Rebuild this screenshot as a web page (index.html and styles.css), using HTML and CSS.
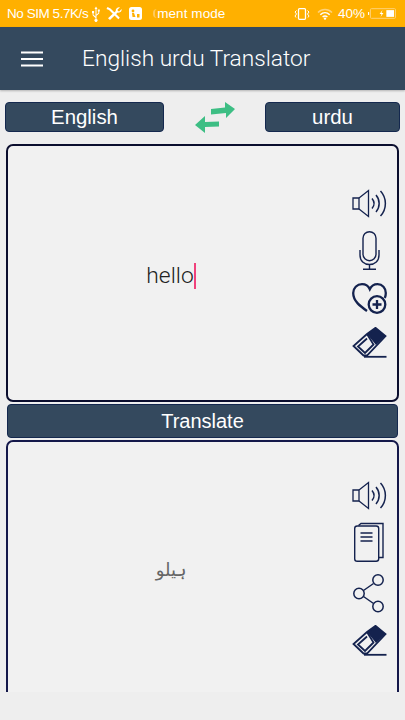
FILE: index.html
```html
<!DOCTYPE html>
<html lang="en">
<head>
<meta charset="utf-8">
<title>English urdu Translator</title>
<link rel="stylesheet" href="styles.css">
</head>
<body>
<div class="status">
  <span class="st-text st-sim">No SIM 5.7K/s</span>
  <svg class="st-usb" viewBox="0 0 8 16"><path d="M4 .5 2.500 3h1v7.500L1.500 8.800V7.200h.6V5H0v2.200h.6v2L3.500 12v1a1.500 1.500 0 1 0 1 0V9.800l2.700-2.300v-2h.6V3.400H5.800v2.100h.5V7L4.500 8.500V3h1z" fill="#fff"/></svg>
  <svg class="st-tools" viewBox="0 0 16 13"><path d="M1.500 0 4.500 1.500 13.800 10.800 12.300 12.300 3 3 .5 2z" fill="#fff"/><path d="M14 .3 11.500 2.700 11.900 4l1.300.4L15.600 2c.4 2-1.200 4.200-3.900 3.600L4 13 2 11.300 9.800 4c-.5-2.300 1.800-4.200 4.200-3.700z" fill="#fff"/></svg>
  <svg class="st-app" viewBox="0 0 13 13"><rect width="13" height="13" rx="2.500" fill="#fff"/><circle cx="4" cy="4" r="1.400" fill="#FFB000"/><path d="M3 6h2l1.500 4h-3z M8 7h2.500v3.500H8z" fill="#FFB000"/></svg>
  <span class="st-fade"></span><span class="st-text st-mode">ment mode</span>
  <span class="st-spacer"></span>
  <svg class="st-vib" viewBox="0 0 16 12"><rect x="4.500" y=".7" width="7" height="10.600" rx="1" fill="none" stroke="#fff" stroke-width="1.300"/><path d="M2.500 2.500 1 4l1.500 2L1 8l1 1.500M13.500 2.500 15 4l-1.500 2L15 8l-1 1.500" fill="none" stroke="#fff"/></svg>
  <svg class="st-wifi" viewBox="0 0 16 12"><path d="M1 4.500c4-4 10-4 14 0" fill="none" stroke="#FFD27A" stroke-width="1.500"/><path d="M3.300 6.800c2.800-2.700 6.600-2.700 9.400 0M5.600 9c1.500-1.300 3.300-1.300 4.800 0" fill="none" stroke="#fff" stroke-width="1.500"/><circle cx="8" cy="10.600" r="1.200" fill="#fff"/></svg>
  <span class="st-text st-batt-text">40%</span>
  <svg class="st-batt" viewBox="0 0 29 11"><rect x="0" y="4" width="1.200" height="3" fill="#fff"/><rect x="2.500" y=".5" width="26" height="10" rx="1" fill="none" stroke="#FFD27A"/><rect x="19" y="2" width="8" height="7" fill="#fff"/><path d="M15 2l-3 4h2l-1 3 3-4h-2z" fill="#fff"/></svg>
</div>

<header class="appbar">
  <svg class="menu-icon" viewBox="0 0 22 16"><path d="M0 1.500h22M0 8h22M0 14.500h22" stroke="#fff" stroke-width="2.200"/></svg>
  <h1 class="title">English urdu Translator</h1>
</header>

<main class="content">
  <div class="langs">
    <button class="btn lang-left">English</button>
    <svg class="swap" viewBox="0 0 40 31"><path d="M16 7 30 5.500V0L40 7 31 16V11L16 12.500z M24 19.500 10 20V14L0 23 10 31V25L24 24.500z" fill="#3DBE84"/></svg>
    <button class="btn lang-right">urdu</button>
  </div>

  <section class="panel panel-input">
    <div class="panel-text"><span class="hello">hello</span><span class="caret"></span></div>
    <div class="tools tools-input">
      <svg class="ico ico-speaker" viewBox="0 0 35 29"><g fill="none" stroke="#14224E" stroke-width="1.300"><path d="M1 9h6v11H1z"/><path d="M7 9 16.500 1.500v26L7 20"/><path d="M20 9.500c2.500 3 2.500 7 0 10M24 6c4.200 5 4.200 12 0 17M28.500 2c6.500 7 6.500 18 0 25" stroke-width="1.500"/></g></svg>
      <svg class="ico ico-mic" viewBox="0 0 35 39"><g fill="none" stroke="#14224E" stroke-width="1.400"><rect x="11" y=".7" width="13" height="29" rx="6.500"/><path d="M8 19v5c0 6 4 9.500 9.500 9.500S27 30 27 24v-5M17.500 33.500v5M11 38.300h13"/></g></svg>
      <svg class="ico ico-heart" viewBox="0 0 35 31"><g fill="none" stroke="#14224E" stroke-width="2.300"><path d="M15 28C8 23 1.200 18 1.200 10 1.200 5 5 1.200 10 1.200c3.500 0 6.500 2 7.800 5 1.400-3 4.400-5 7.800-5 4.700 0 8.200 3.800 8.200 8.800 0 2-.3 3.500-1 5"/><circle cx="25" cy="21.500" r="8.300"/><path d="M25 17v9M20.500 21.500h9"/></g></svg>
      <svg class="ico ico-eraser" viewBox="0 0 35 31"><path d="M15 7 23.500 .8 33.500 9 24 18z" fill="#14224E"/><g fill="none" stroke="#14224E" stroke-width="1.800"><path d="M15 7 23.500 .8 33.500 9 15 28.500H11.500L1.500 19z"/><path d="M15 11.500 6 19.500 13 26 21.500 17.500 15 7"/><path d="M12 29.800h22.500"/></g></svg>
    </div>
  </section>

  <button class="btn translate">Translate</button>

  <section class="panel panel-output">
    <div class="panel-text"><span class="urdu" lang="ur" dir="rtl">ہیلو</span></div>
    <div class="tools tools-output">
      <svg class="ico ico-speaker" viewBox="0 0 35 29"><g fill="none" stroke="#14224E" stroke-width="1.300"><path d="M1 9h6v11H1z"/><path d="M7 9 16.500 1.500v26L7 20"/><path d="M20 9.500c2.500 3 2.500 7 0 10M24 6c4.200 5 4.200 12 0 17M28.500 2c6.500 7 6.500 18 0 25" stroke-width="1.500"/></g></svg>
      <svg class="ico ico-doc" viewBox="0 0 35 40"><g fill="none" stroke="#14224E" stroke-width="1.400"><path d="M6.500 3.500 9 1.500H31V35.500H27"/><rect x="2.700" y="4" width="24" height="35.300" rx="2.500"/><path d="M8.500 11h12M8.500 15h12M8.500 19h12" stroke-width="1.500"/></g></svg>
      <svg class="ico ico-share" viewBox="0 0 35 39"><g fill="none" stroke="#14224E" stroke-width="1.500"><circle cx="26" cy="6" r="5.200"/><circle cx="7" cy="19.500" r="5.200"/><circle cx="26" cy="32.500" r="5.200"/><path d="M11.500 16.500 21.500 9.500M11.500 22.500 21.500 29.500"/></g></svg>
      <svg class="ico ico-eraser" viewBox="0 0 35 31"><path d="M15 7 23.500 .8 33.500 9 24 18z" fill="#14224E"/><g fill="none" stroke="#14224E" stroke-width="1.800"><path d="M15 7 23.500 .8 33.500 9 15 28.500H11.500L1.500 19z"/><path d="M15 11.500 6 19.500 13 26 21.500 17.500 15 7"/><path d="M12 29.800h22.500"/></g></svg>
    </div>
  </section>
</main>
</body>
</html>
```

FILE: styles.css
```css
* { box-sizing: border-box; }
html, body { margin: 0; padding: 0; height: 720px; overflow: hidden; }
body { background: #eeeeee; font-family: "Liberation Sans", Arial, sans-serif; }

.status {
  height: 27px;
  background: #FFB000;
  display: flex;
  align-items: center;
  padding: 0 9px 0 7px;
  color: #fff;
}
.st-text { font-size: 13.500px; white-space: nowrap; }
.st-sim { letter-spacing: -0.450px; }
.st-usb { width: 8px; height: 16px; margin-left: 4px; }
.st-tools { width: 16px; height: 13px; margin-left: 6px; }
.st-app { width: 13px; height: 13px; margin-left: 7px; }
.st-fade { width: 4px; height: 9px; margin-left: 11px; border-left: 2px solid #FFC95C; border-radius: 4px 0 0 4px; }
.st-mode { letter-spacing: 0.080px; }
.st-spacer { flex: 1; }
.st-vib { width: 16px; height: 12px; }
.st-wifi { width: 16px; height: 12px; margin-left: 7px; }
.st-batt-text { margin-left: 5px; }
.st-batt { width: 28px; height: 11px; margin-left: 3px; }

.appbar {
  height: 63px;
  background: #34495E;
  display: flex;
  align-items: center;
  padding: 0 0 0 21px;
  box-shadow: 0 1px 2px rgba(0, 0, 0, 0.25);
  position: relative;
}
.menu-icon { width: 22px; height: 16px; }
.title {
  margin: 0 0 0 39px;
  font-family: Roboto, sans-serif;
  font-weight: 300;
  font-size: 22.700px;
  color: #fff;
  white-space: nowrap;
}

.content {
  height: 602px;
  overflow: hidden;
  padding-top: 12px;
}

.btn {
  display: block;
  background: #34495E;
  border: 1px solid #14284E;
  border-radius: 4px;
  color: #fff;
  font-family: "Liberation Sans", Arial, sans-serif;
  font-size: 20.400px;
  padding: 0;
}

.langs { display: flex; align-items: center; padding: 0 5px; height: 30px; }
.lang-left { width: 159px; height: 30px; }
.lang-right { width: 135px; height: 30px; margin-left: auto; }
.swap { width: 40px; height: 31px; margin-left: 31px; flex: none; }

.panel {
  margin: 0 6px;
  border: 2px solid #14184A;
  border-radius: 7px;
  background: #f1f1f1;
  display: flex;
}
.panel-input { margin-top: 12px; height: 258px; border-color: #0B0E2E; }
.panel-output { margin-top: 2px; height: 270px; }

.panel-text {
  flex: 1;
  display: flex;
  justify-content: center;
}
.panel-input .panel-text { padding: 115px 13px 0 0; }
.panel-output .panel-text { padding: 117px 12px 0 0; }
.hello { font-family: Roboto, sans-serif; font-weight: 300; font-size: 22.800px; color: #222; line-height: 26px; margin-top: 2px; height: 26px; }
.caret { width: 2px; height: 26px; background: #F0427C; margin-top: 2px; }
.urdu { font-family: "DejaVu Sans", sans-serif; font-size: 18px; color: #666; }

.tools { width: 50px; display: flex; flex-direction: column; align-items: center; padding-right: 6px; }
.tools-input { padding-top: 43px; gap: 13px; }
.tools-output { padding-top: 39px; gap: 12px; }
.ico { width: 35px; display: block; flex: none; }
.ico-speaker { height: 29px; }
.ico-mic { height: 39px; }
.ico-heart { height: 31px; }
.ico-eraser { height: 31px; }
.ico-doc { height: 40px; }
.ico-share { height: 39px; }

.translate { margin: 2px 7px 0; width: 391px; height: 34px; font-size: 20px; }
```
